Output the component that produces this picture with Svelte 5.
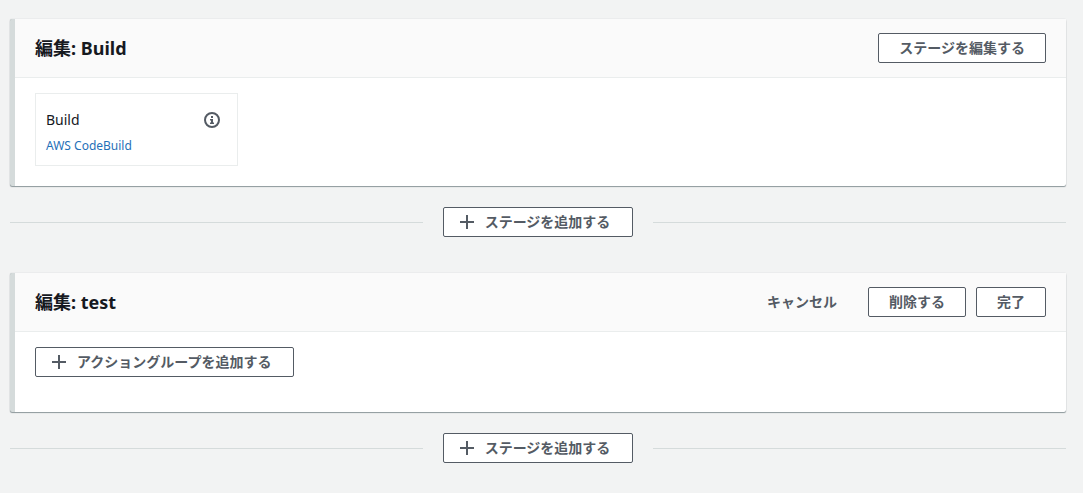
<script>
  const stages = [
    { name: 'Build', editing: false, actions: [{ name: 'Build', provider: 'AWS CodeBuild' }] },
    { name: 'test', editing: true, actions: [] }
  ];
</script>

{#snippet plus()}
  <svg viewBox="0 0 16 16" aria-hidden="true"><path d="M8 1v14M1 8h14" /></svg>
{/snippet}

<main>
  {#each stages as stage}
    <section class="stage">
      <header>
        <h2>編集: {stage.name}</h2>
        <div class="buttons">
          {#if stage.editing}
            <button class="plain">キャンセル</button>
            <button>削除する</button>
            <button>完了</button>
          {:else}
            <button>ステージを編集する</button>
          {/if}
        </div>
      </header>
      <div class="content">
        {#each stage.actions as action}
          <article>
            <div class="action-name">
              <span>{action.name}</span>
              <button class="info" aria-label="情報">
                <svg viewBox="0 0 16 16" aria-hidden="true">
                  <circle cx="8" cy="8" r="7" />
                  <path class="letter" d="M7 4h2v2H7zM6 7h3v3.5h1V12H6v-1.5h1v-2H6z" />
                </svg>
              </button>
            </div>
            <a href="#codebuild">{action.provider}</a>
          </article>
        {/each}
        {#if stage.editing}
          <button class="add">{@render plus()}アクショングループを追加する</button>
        {/if}
      </div>
    </section>
    <div class="divider">
      <button class="add">{@render plus()}ステージを追加する</button>
    </div>
  {/each}
</main>

<style>
  :global(body) {
    margin: 0;
    background: #f2f3f3;
  }
  main {
    padding: 19px 17px 0 10px;
    font-family: "Noto Sans", "Noto Sans CJK JP", sans-serif;
    font-size: 14px;
    line-height: 20px;
    color: #16191f;
  }
  .stage {
    background: #fff;
    border-left: 5px solid #d5dbdb;
    border-radius: 2px;
    box-shadow: 0 1px 1px 0 rgba(0, 28, 36, 0.4), 0 0 1px 0 rgba(0, 28, 36, 0.3);
  }
  header {
    display: flex;
    align-items: center;
    justify-content: space-between;
    padding: 14px 20px;
    background: #fafafa;
    border-bottom: 1px solid #eaeded;
  }
  h2 {
    margin: 0;
    font-size: 18px;
    line-height: 30px;
    font-weight: 700;
  }
  .buttons {
    display: flex;
    gap: 10px;
  }
  button {
    box-sizing: border-box;
    height: 30px;
    padding: 0 20px;
    border: 1px solid #545b64;
    border-radius: 2px;
    background: #fff;
    color: #545b64;
    font: inherit;
    font-weight: 700;
    white-space: nowrap;
  }
  .plain {
    border-color: transparent;
    background: transparent;
  }
  .content {
    min-height: 45px;
    padding: 15px 20px 20px;
  }
  article {
    box-sizing: border-box;
    width: 203px;
    min-height: 73px;
    padding: 16px 17px 8px 10px;
    border: 1px solid #eaeded;
  }
  .action-name {
    display: flex;
    align-items: center;
    justify-content: space-between;
  }
  .info {
    display: flex;
    height: 20px;
    padding: 2px 0;
    border: 0;
    background: none;
  }
  svg {
    width: 16px;
    height: 16px;
    fill: none;
    stroke: #545b64;
    stroke-width: 2;
  }
  .letter {
    fill: #545b64;
    stroke: none;
  }
  article a {
    display: block;
    margin-top: 6px;
    font-size: 12px;
    color: #1f70b8;
    text-decoration: none;
  }
  .add {
    display: inline-flex;
    align-items: center;
    gap: 10px;
    padding: 0 22px 0 15px;
  }
  .divider {
    display: flex;
    align-items: center;
    gap: 20px;
    padding: 21px 0 36px;
  }
  .divider:last-child {
    padding-bottom: 30px;
  }
  .divider::before,
  .divider::after {
    content: "";
    flex: 1;
    height: 1px;
    background: #d5dbdb;
  }
</style>
